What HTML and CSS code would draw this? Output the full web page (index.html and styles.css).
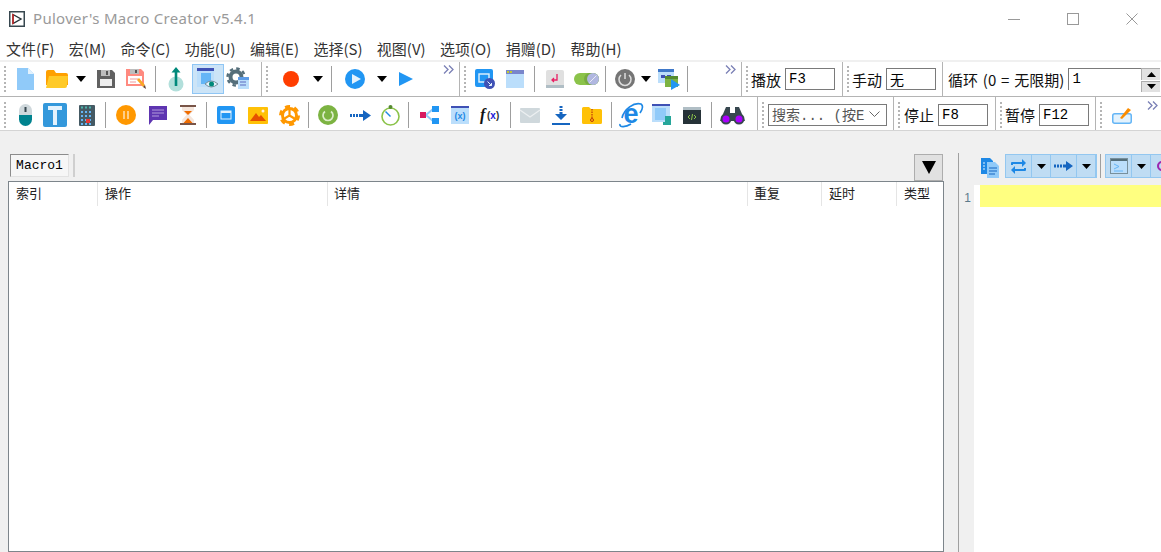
FILE: index.html
```html
<!DOCTYPE html>
<html lang="zh">
<head>
<meta charset="utf-8">
<title>Pulover's Macro Creator v5.4.1</title>
<link rel="stylesheet" href="styles.css">
</head>
<body>
<header class="titlebar">
  <svg class="appicon" width="16" height="16" viewBox="0 0 16 16"><rect x=".75" y=".75" width="14.5" height="14.5" fill="#fff" stroke="#37474f" stroke-width="1.5"/><path d="M4 3.500 12 8l-8 4.500z" fill="none" stroke="#263238" stroke-width="1.400"/><path d="M4 3v10" stroke="#c62828" stroke-width="1.600"/></svg>
  <span class="apptitle">Pulover's Macro Creator v5.4.1</span>
  <div class="winbtns">
    <svg width="12" height="12" viewBox="0 0 12 12"><path d="M0 6.500h12" stroke="#999"/></svg>
    <svg width="12" height="12" viewBox="0 0 12 12"><rect x=".5" y=".5" width="11" height="11" fill="none" stroke="#999"/></svg>
    <svg width="12" height="12" viewBox="0 0 12 12"><path d="M.5.500l11 11M11.500.500l-11 11" stroke="#999"/></svg>
  </div>
</header>
<nav class="menubar">
  <span>文件(F)</span><span>宏(M)</span><span>命令(C)</span><span>功能(U)</span><span>编辑(E)</span><span>选择(S)</span><span>视图(V)</span><span>选项(O)</span><span>捐赠(D)</span><span>帮助(H)</span>
</nav>
<section class="rebar">
  <div class="row row1">
    <div class="band b11">
      <i class="grip"></i>
      <svg width="17" height="22" viewBox="0 0 17 22"><path d="M0 0h11l6 6v16H0z" fill="#90caf9"/><path d="M11 0l6 6h-6z" fill="#e3f2fd"/></svg>
      <svg width="22" height="18" viewBox="0 0 22 18"><path d="M0 2a2 2 0 0 1 2-2h6l2 3h10a2 2 0 0 1 2 2v10H0z" fill="#ffa000"/><path d="M3 6h19l-1 10a2 2 0 0 1-2 2H0z" fill="#ffca28"/></svg>
      <svg class="caret" width="10" height="6" viewBox="0 0 10 6"><path d="M0 0h10L5 6z"/></svg>
      <svg width="18" height="18" viewBox="0 0 18 18"><path d="M0 0h15l3 3v15H0z" fill="#616161"/><rect x="4" y="0" width="9" height="6" fill="#bdbdbd"/><rect x="9" y="1" width="2" height="4" fill="#555"/><rect x="3" y="9" width="12" height="7" fill="#eee"/></svg>
      <svg width="20" height="20" viewBox="0 0 20 20"><path d="M0 0h15l3 3v14H0z" fill="#ff8a80"/><rect x="4" y="0" width="9" height="5" fill="#bdbdbd"/><rect x="9" y="1" width="2" height="3" fill="#555"/><rect x="2" y="7" width="14" height="8" fill="#fff"/><path d="M4 10h8M4 13h6" stroke="#ef9a9a"/><path d="M11 11l2-2 6 7-2 2z" fill="#f9a825"/><path d="M17 18l2-2 1 4z" fill="#5d4037"/></svg>
      <i class="sep"></i>
      <svg width="16" height="25" viewBox="0 0 16 25"><circle cx="8" cy="17" r="7.500" fill="#b2dfdb"/><path d="M8 0l4.500 5.500H9.300V19H6.700V5.500H3.500z" fill="#00897b"/></svg>
      <span class="pressed"><svg width="24" height="24" viewBox="0 0 24 24"><rect x="1" y="1" width="17" height="3" fill="#3f51b5"/><rect x="1" y="4" width="17" height="16" fill="#bbdefb"/><rect x="5" y="6" width="10" height="11" fill="#64b5f6"/><path d="M9 17q6-6 13 0-7 6-13 0z" fill="#e3f2fd" stroke="#78909c"/><circle cx="15.500" cy="17" r="2.500" fill="#00897b"/></svg></span>
      <svg width="22" height="22" viewBox="0 0 22 22"><circle cx="9" cy="9" r="5.500" fill="none" stroke="#546e7a" stroke-width="4"/><circle cx="9" cy="9" r="8.500" fill="none" stroke="#546e7a" stroke-width="2.400" stroke-dasharray="3.500 3.170"/><rect x="11" y="9" width="11" height="12" fill="#bbdefb"/><rect x="11" y="9" width="11" height="3" fill="#5c9be6"/><path d="M13 14h6M13 17h6" stroke="#5c6bc0"/></svg>
    </div>
    <div class="band b12">
      <i class="grip"></i>
      <svg width="18" height="18" viewBox="0 0 18 18"><circle cx="9" cy="9" r="8" fill="#ff3d00"/></svg>
      <svg class="caret" width="10" height="6" viewBox="0 0 10 6"><path d="M0 0h10L5 6z"/></svg>
      <i class="sep"></i>
      <svg width="20" height="20" viewBox="0 0 20 20"><circle cx="10" cy="10" r="10" fill="#2196f3"/><path d="M7 5l9 5-9 5z" fill="#e3f2fd"/></svg>
      <svg class="caret" width="10" height="6" viewBox="0 0 10 6"><path d="M0 0h10L5 6z"/></svg>
      <svg width="14" height="14" viewBox="0 0 14 14"><path d="M0 0l14 7-14 7z" fill="#2196f3"/></svg>
      <svg class="chev" width="11" height="9" viewBox="0 0 11 9"><path d="M1 .500l4 4-4 4M6 .500l4 4-4 4" fill="none" stroke="#7a7fb5" stroke-width="1.300"/></svg>
    </div>
    <div class="band b13">
      <i class="grip"></i>
      <svg width="20" height="20" viewBox="0 0 20 20"><rect x="0" y="0" width="18" height="18" rx="2" fill="#2196f3"/><rect x="4" y="5" width="10" height="8" fill="none" stroke="#e3f2fd" stroke-width="1.400"/><circle cx="14.500" cy="14.500" r="5.500" fill="#3f51b5"/><path d="M12.500 12.500l4 4M16.500 14v2.500H14" fill="none" stroke="#e3f2fd"/></svg>
      <svg width="18" height="18" viewBox="0 0 18 18"><rect width="18" height="18" fill="#bbdefb"/><rect width="18" height="4" fill="#7986cb"/><rect x="1" y="1" width="2" height="2" fill="#c0ca33"/><rect x="4" y="1" width="2" height="2" fill="#c0ca33"/></svg>
      <i class="sep"></i>
      <svg width="18" height="18" viewBox="0 0 18 18"><path d="M2 0h14a2 2 0 0 1 2 2v16H0V2a2 2 0 0 1 2-2z" fill="#e0e0e0"/><rect y="15" width="18" height="3" fill="#b0bec5"/><path d="M11 4v6H6M8 8l-2 2 2 2" fill="none" stroke="#e91e63" stroke-width="1.300"/></svg>
      <svg width="25" height="12" viewBox="0 0 25 12"><rect width="25" height="12" rx="6" fill="#8bc34a"/><rect x="10" width="15" height="12" rx="6" fill="#66913a" opacity=".5"/><circle cx="19" cy="6" r="6" fill="#b0b7e0"/><path d="M15.500 9.500l7-7" stroke="#e8eaf6"/></svg>
      <i class="sep"></i>
      <svg width="20" height="20" viewBox="0 0 20 20"><circle cx="10" cy="10" r="10" fill="#757575"/><path d="M6 6a6 6 0 1 0 8 0" fill="none" stroke="#ddd" stroke-width="1.500"/><path d="M10 4v6" stroke="#ddd" stroke-width="1.500"/></svg>
      <svg class="caret" width="10" height="6" viewBox="0 0 10 6"><path d="M0 0h10L5 6z"/></svg>
      <svg width="22" height="21" viewBox="0 0 22 21"><rect width="16" height="14" fill="#bbdefb"/><rect width="16" height="3" fill="#3f78c9"/><rect x="3" y="6" width="4" height="3" fill="#3f51b5"/><rect x="9" y="6" width="4" height="3" fill="#3f51b5"/><rect x="7" y="7" width="13" height="11" fill="#7cb342"/><rect x="7" y="7" width="13" height="3" fill="#558b2f"/><path d="M13 10l9 6-9 5z" fill="#2196f3"/></svg>
      <i class="sep"></i>
      <svg class="chev" width="11" height="9" viewBox="0 0 11 9"><path d="M1 .500l4 4-4 4M6 .500l4 4-4 4" fill="none" stroke="#7a7fb5" stroke-width="1.300"/></svg>
    </div>
    <div class="band field b14"><i class="grip"></i><label>播放</label><span class="inp">F3</span></div>
    <div class="band field b15"><i class="grip"></i><label>手动</label><span class="inp cjk">无</span></div>
    <div class="band field b16"><label class="wide">循环 (0 = 无限期)</label><span class="inp loop">1</span>
      <span class="spin"><b><svg width="9" height="5" viewBox="0 0 9 5"><path d="M0 5h9L4.500 0z"/></svg></b><b><svg width="9" height="5" viewBox="0 0 9 5"><path d="M0 0h9L4.500 5z"/></svg></b></span>
    </div>
  </div>
  <div class="row row2">
    <div class="band b21">
      <i class="grip"></i>
      <svg width="13" height="22" viewBox="0 0 13 22"><path d="M0 6.500a6.500 6.500 0 0 1 13 0V11H0z" fill="#cfd8dc"/><path d="M0 11h13v4.500a6.500 6.500 0 0 1-13 0z" fill="#00838f"/><rect x="5.500" y="3" width="2" height="5" fill="#37474f"/></svg>
      <svg width="24" height="24" viewBox="0 0 24 24"><rect width="24" height="24" rx="2" fill="#3498db"/><path d="M5 3h14v4h-5v15h-4V7H5z" fill="#e3f2fd"/></svg>
      <svg width="16" height="21" viewBox="0 0 16 21"><rect width="16" height="21" rx="1" fill="#455a64"/><path d="M2 2.500h12" stroke="#4db6ac" stroke-width="2" stroke-dasharray="2 2"/><path d="M2 7h12M2 11h12M2 15h12M2 19h12" stroke="#64b5f6" stroke-width="2" stroke-dasharray="2 2"/><rect x="7" y="14" width="4" height="4" fill="#e53935"/></svg>
      <i class="sep"></i>
      <svg width="20" height="20" viewBox="0 0 20 20"><circle cx="10" cy="10" r="10" fill="#ff9800"/><path d="M8 6v8M12 6v8" stroke="#ffe0b2" stroke-width="1.500"/></svg>
      <svg width="18" height="19" viewBox="0 0 18 19"><path d="M0 0h18v14H4l-4 5z" fill="#5e35b1"/><path d="M3 4h12M3 7h12M3 10h7" stroke="#b39ddb"/></svg>
      <svg width="16" height="20" viewBox="0 0 16 20"><path d="M2 2h12v3L9.500 10 14 15v3H2v-3l4.500-5L2 5z" fill="#f5e6dc"/><path d="M4 6h8l-4 4zM3.500 18 8 13l4.500 5z" fill="#ef6c00"/><rect width="16" height="2" fill="#795548"/><rect y="18" width="16" height="2" fill="#795548"/></svg>
      <i class="sep"></i>
      <svg width="18" height="18" viewBox="0 0 18 18"><rect width="18" height="18" rx="2" fill="#2196f3"/><rect x="3.500" y="4.500" width="11" height="9" fill="#e3f2fd"/><rect x="4.500" y="7" width="9" height="5.500" fill="#2196f3"/></svg>
      <svg width="20" height="17" viewBox="0 0 20 17"><rect width="20" height="17" rx="1" fill="#ffc107"/><path d="M2 14l6-8 3 4 2-2 5 6z" fill="#e65100"/><circle cx="15" cy="4" r="1.500" fill="#fff3e0"/></svg>
      <svg width="21" height="21" viewBox="0 0 21 21"><circle cx="10.500" cy="10.500" r="7" fill="none" stroke="#ff9800" stroke-width="3"/><circle cx="10.500" cy="10.500" r="9" fill="none" stroke="#ff9800" stroke-width="3" stroke-dasharray="5 4.420"/><path d="M10.500 3v7.500L4 14.500M10.500 10.500l6.500 4" stroke="#ff9800" stroke-width="2.200" fill="none"/></svg>
      <i class="sep"></i>
      <svg width="20" height="20" viewBox="0 0 20 20"><circle cx="10" cy="10" r="10" fill="#7cb342"/><path d="M7 6.500a5 5 0 1 0 6 0" fill="none" stroke="#dcedc8" stroke-width="1.700"/></svg>
      <svg width="21" height="11" viewBox="0 0 21 11"><path d="M0 4h2v3H0zM3 4h2v3H3zM6 4h2v3H6zM9 4h4V0l8 5.500-8 5.500V7H9z" fill="#1565c0"/></svg>
      <svg width="19" height="21" viewBox="0 0 19 21"><circle cx="9.500" cy="11.500" r="8.500" fill="none" stroke="#8bc34a" stroke-width="1.600"/><circle cx="9.500" cy="2" r="2" fill="#558b2f"/><path d="M4.500 6.500l5 5" stroke="#1e88e5" stroke-width="1.400"/></svg>
      <i class="sep"></i>
      <svg width="19" height="18" viewBox="0 0 19 18"><path d="M6 9L13 3M6 9l7 6" stroke="#90caf9" stroke-width="2"/><rect y="6" width="6" height="6" fill="#d81b60"/><rect x="12" width="7" height="6" fill="#2196f3"/><rect x="12" y="12" width="7" height="6" fill="#2196f3"/></svg>
      <svg width="18" height="18" viewBox="0 0 18 18"><rect width="18" height="18" fill="#bbdefb"/><rect width="18" height="2" fill="#3f51b5"/><text x="9" y="13" class="svgx">(x)</text></svg>
      <svg width="21" height="18" viewBox="0 0 21 18"><text x="0" y="14" class="svgf">f</text><text x="7" y="13" class="svgfx">(<tspan fill="#1a1ad6">x</tspan>)</text></svg>
      <i class="sep"></i>
      <svg width="20" height="15" viewBox="0 0 20 15"><rect width="20" height="15" rx="1" fill="#cfd8dc"/><path d="M0 2l10 7 10-7" fill="none" stroke="#eceff1" stroke-width="1.300"/></svg>
      <svg width="18" height="19" viewBox="0 0 18 19"><path d="M7.500 0h3v2h-3zM7.500 3h3v2h-3zM7.500 6h3v2H15l-6 6-6-6h4.500z" fill="#1565c0"/><rect y="17" width="18" height="2" fill="#1565c0"/></svg>
      <svg width="20" height="17" viewBox="0 0 20 17"><path d="M0 1.500A1.500 1.500 0 0 1 1.500 0H7l2 2h9.500A1.500 1.500 0 0 1 20 3.500v12a1.500 1.500 0 0 1-1.500 1.500h-17A1.500 1.500 0 0 1 0 15.500z" fill="#ffc107"/><path d="M10 2v9" stroke="#bf360c" stroke-width="1.200" stroke-dasharray="1.500 1"/><circle cx="10" cy="13" r="1.500" fill="none" stroke="#bf360c"/></svg>
      <i class="sep"></i>
      <svg width="25" height="25" viewBox="0 0 25 25"><text x="12" y="20" class="svgie">e</text><path d="M3 15C5 6 15-1 22 1c3 2 1 6-1 9M1 21c-1 4 6 3 11 0" fill="none" stroke="#1e88e5" stroke-width="1.700"/></svg>
      <svg width="20" height="22" viewBox="0 0 20 22"><rect width="18" height="18" fill="#bbdefb"/><rect width="18" height="2" fill="#3f51b5"/><rect x="3" y="4" width="11" height="12" fill="#90caf9"/><path d="M13 12h6v6h-6zM11 18h8v3h-8z" fill="#26a69a"/></svg>
      <svg width="18" height="17" viewBox="0 0 18 17"><rect width="18" height="17" fill="#263238"/><rect width="18" height="3" fill="#b0bec5"/><path d="M7 8l-2 2 2 2M11 8l2 2-2 2M8.500 13l1-6" fill="none" stroke="#8bc34a"/></svg>
      <i class="sep"></i>
      <svg width="25" height="19" viewBox="0 0 25 19"><path d="M6 1h4v6h5V1h4l6 14H0z" fill="#37474f"/><circle cx="6" cy="13" r="5.500" fill="#37474f"/><circle cx="19" cy="13" r="5.500" fill="#37474f"/><circle cx="6" cy="13" r="3.500" fill="#aa00ff"/><circle cx="19" cy="13" r="3.500" fill="#aa00ff"/></svg>
    </div>
    <div class="band field b22"><i class="grip"></i>
      <span class="combo"><span>搜索... (按E</span><svg width="11" height="6" viewBox="0 0 11 6"><path d="M.5.500l5 5 5-5" fill="none" stroke="#666"/></svg></span>
    </div>
    <div class="band field b23"><i class="grip"></i><label>停止</label><span class="inp">F8</span></div>
    <div class="band field b24"><i class="grip"></i><label>暂停</label><span class="inp">F12</span></div>
    <div class="band b25"><i class="grip"></i>
      <svg width="20" height="18" viewBox="0 0 20 18"><rect x=".75" y="7.750" width="18.500" height="9.500" rx="2" fill="#e3f2fd" stroke="#64b5f6" stroke-width="1.500"/><path d="M8 12l8-10 3 2-9 9z" fill="#fb8c00"/></svg>
      <svg class="chev" width="11" height="9" viewBox="0 0 11 9"><path d="M1 .500l4 4-4 4M6 .500l4 4-4 4" fill="none" stroke="#7a7fb5" stroke-width="1.300"/></svg>
    </div>
  </div>
</section>
<main class="workspace">
  <div class="macro-pane">
    <div class="tabstrip">
      <span class="tab">Macro1</span><i class="tabsep"></i>
      <span class="tabmenu"><svg width="14" height="13" viewBox="0 0 14 13"><path d="M0 0h14L7 13z"/></svg></span>
    </div>
    <div class="list">
      <div class="listhead"><span class="c1">索引</span><span class="c2">操作</span><span class="c3">详情</span><span class="c4">重复</span><span class="c5">延时</span><span class="c6">类型</span></div>
    </div>
  </div>
  <i class="splitter"></i>
  <div class="code-pane">
    <div class="codetools">
      <svg width="18" height="20" viewBox="0 0 18 20"><path d="M0 0h9l3 3v13H0z" fill="#1e88e5"/><path d="M6 4h8l4 4v12H6z" fill="#90caf9"/><path d="M8 10h8M8 13h8M8 16h6" stroke="#1565c0"/><path d="M2 5h2M2 8h2M2 11h2" stroke="#e3f2fd"/></svg>
      <div class="btngroup g1">
        <span class="gb w26"><svg width="17" height="17" viewBox="0 0 17 17"><path d="M1 7V5a1 1 0 0 1 1-1h10V1l4 4-4 4V6H3v1zM16 10v2a1 1 0 0 1-1 1H5v3l-4-4 4-4v3h9v-1z" fill="#1e88e5"/></svg></span>
        <span class="gb w19"><svg class="caret" width="9" height="5" viewBox="0 0 9 5"><path d="M0 0h9L4.500 5z"/></svg></span>
        <span class="gb w26"><svg width="19" height="10" viewBox="0 0 19 10"><path d="M0 3.500h2v3H0zM3 3.500h2v3H3zM6 3.500h2v3H6zM9 3.500h3V0l7 5-7 5V6.500H9z" fill="#1565c0"/></svg></span>
        <span class="gb w19"><svg class="caret" width="9" height="5" viewBox="0 0 9 5"><path d="M0 0h9L4.500 5z"/></svg></span>
      </div>
      <i class="sep thin"></i>
      <div class="btngroup g2">
        <span class="gb w26"><svg width="18" height="16" viewBox="0 0 18 16"><rect x=".5" y=".5" width="17" height="15" fill="#bbdefb" stroke="#78909c"/><rect x="1" y="1" width="16" height="2" fill="#546e7a"/><path d="M4 6l5 2.500-5 2.500M4 13h9" fill="none" stroke="#64b5f6"/></svg></span>
        <span class="gb w19"><svg class="caret" width="9" height="5" viewBox="0 0 9 5"><path d="M0 0h9L4.500 5z"/></svg></span>
        <span class="gb w10"><svg width="10" height="10" viewBox="0 0 10 10"><circle cx="5" cy="5" r="4" fill="none" stroke="#9c27b0" stroke-width="2"/></svg></span>
      </div>
    </div>
    <div class="editor">
      <div class="gutter">1</div>
      <div class="lines"><div class="curline"></div></div>
    </div>
  </div>
</main>
</body>
</html>
```
FILE: styles.css
```css
* { box-sizing: border-box; }
html, body { margin: 0; height: 100%; overflow: hidden; }
body {
  width: 1161px; height: 552px; background: #f0f0f0; color: #111;
  font-family: "Noto Sans CJK SC", "Noto Sans", sans-serif; font-size: 14px;
  display: flex; flex-direction: column;
}
i { display: block; }
svg { display: block; overflow: visible; }

.titlebar { height: 38px; background: #fff; display: flex; align-items: center; padding-left: 9px; flex: none; }
.appicon { margin-top: -1px; }
.apptitle { margin-left: 8px; margin-top: -2px; font-family: "Noto Sans", sans-serif; font-size: 15px; color: #9a9a9a; letter-spacing: .3px; }
.winbtns { margin-left: auto; display: flex; gap: 47px; padding-right: 23px; }

.menubar { height: 22px; background: #fff; display: flex; gap: 14.400px; padding: 0 0 2px 6px; align-items: center; flex: none; font-size: 15px; color: #333; }

.rebar { height: 72px; padding-top: 2px; flex: none; display: flex; flex-direction: column; }
.row { display: flex; background: #fff; }
.row1 { height: 35px; border-bottom: 1px solid #b4b4b4; }
.row2 { height: 34px; border-bottom: 1px solid #d4d4d4; }
.row2 .band { padding-top: 3px; }
.row2 label { margin-top: -2px; }
.band { height: 100%; display: grid; align-items: center; justify-items: center; border-right: 1px solid #b4b4b4; flex: none; }
.band:last-child { border-right: 0; }
.grip {
  width: 4px; height: 28px; justify-self: start; margin-left: 3px;
  background-image: radial-gradient(circle, #b5b5b5 1px, transparent 1.200px);
  background-size: 4px 4px;
}
.sep { width: 1px; height: 26px; background: #9e9e9e; }
.chev { align-self: start; justify-self: end; margin: 3px 5px 0 0; }
.row2 .chev { margin: 1px 3px 0 0; }
.pressed { width: 32px; height: 30px; background: #cce4f7; border: 1px solid #8fc6f5; display: flex; align-items: center; justify-content: center; }

.b11 { width: 262px; grid-template-columns: 10px 30px 34px 14px 36px 24px 14px 28px 36px 24px 1fr; }
.b12 { width: 198px; grid-template-columns: 10px 38px 16px 10px 38px 16px 32px 1fr; }
.b13 { width: 282px; grid-template-columns: 10px 30px 30px 8px 34px 28px 10px 30px 12px 34px 2px 1fr; }
.b14 { width: 101px; }
.b15 { width: 100px; }
.b16 { width: 218px; padding-left: 5px; }
.b21 { width: 758px; grid-template-columns: 10px 30px 30px 34px 2px 40px 24px 36px 1px 38px 26px 36px 2px 38px 26px 34px 2px 40px 22px 38px 2px 38px 24px 38px 1px 38px 24px 36px 2px 40px 1fr; }
.b22 { width: 136px; }
.b23 { width: 102px; }
.b24 { width: 100px; }
.b25 { width: 65px; grid-template-columns: 10px 32px 1fr; }

.field { display: flex; align-items: center; justify-content: flex-start; gap: 4px; }
.field .grip { margin-right: -2px; }
.b23 .grip { margin-right: -1px; }
label { font-size: 15px; line-height: 1; color: #111; white-space: nowrap; }
label.wide { word-spacing: 1.500px; }
.inp {
  width: 50px; height: 22px; border: 1px solid #7a7a7a; background: #fff; flex: none;
  font-family: "Liberation Mono", monospace; font-size: 14px; line-height: 20px; padding-left: 3px; color: #000;
}
.inp.cjk { font-family: "Noto Sans CJK SC", sans-serif; }
.inp.loop { width: 73px; border-right: 0; border-bottom: 0; }
.spin { width: 19px; height: 24px; margin-left: -4px; display: flex; flex-direction: column; gap: 1px; margin-top: 2px; flex: none; }
.spin b { flex: 1; background: #e1e1e1; border: 1px solid #adadad; border-width: 1px 0 0 1px; display: flex; align-items: center; justify-content: center; }
.combo {
  width: 119px; height: 22px; margin-left: 1px; border: 1px solid #7a7a7a; display: flex; align-items: center; justify-content: space-between; flex: none;
  padding: 0 6px 2px 3px; font-family: "Liberation Mono", "Noto Sans CJK SC", monospace; font-size: 14px; color: #555; white-space: nowrap; overflow: hidden;
}

.workspace { flex: 1; display: flex; min-height: 0; padding-top: 22px; }
.macro-pane { width: 958px; flex: none; padding-left: 8px; display: flex; flex-direction: column; }
.tabstrip { height: 27px; display: flex; align-items: flex-start; padding-left: 2px; flex: none; }
.tab {
  width: 59px; height: 23px; border: 1px solid #e2e2e2; border-top-color: #8c8c8c; border-left-color: #8c8c8c;
  font-family: "Liberation Mono", monospace; font-size: 13px; line-height: 22px; text-align: center; color: #000;
  background: #f6f6f6;
}
.tabsep { width: 2px; height: 23px; margin-left: 4px; background: #cfcfcf; }
.tabmenu { margin-left: auto; margin-right: 15px; width: 29px; height: 27px; background: #e1e1e1; border: 1px solid #adadad; display: flex; align-items: center; justify-content: center; }
.list { width: 936px; flex: 1; background: #fff; border: 1px solid #7d858b; }
.listhead { height: 24px; display: flex; align-items: center; font-size: 13px; color: #222; }
.listhead span { height: 24px; line-height: 22px; padding-left: 7px; border-right: 1px solid #e5e5e5; flex: none; }
.c1 { width: 89px; }
.c2 { width: 230px; }
.c3 { width: 420px; }
.c4 { width: 74px; }
.c5 { width: 75px; }
.listhead .c6 { width: 46px; border: 0; }
.listhead .c3, .listhead .c4 { padding-left: 6px; }

.splitter { width: 1px; flex: none; background: #a0a0a0; margin-top: -1px; }
.code-pane { flex: 1; min-width: 0; display: flex; flex-direction: column; overflow: hidden; }
.codetools { height: 31px; display: flex; align-items: flex-start; padding-left: 22px; flex: none; }
.codetools > svg { margin-top: 4px; }
.btngroup { height: 24px; margin-left: 6px; display: flex; background: #bfdcf3; border: 1px solid #93c7f0; flex: none; }
.g2 { margin-left: 4px; border-right: 0; }
.gb { display: flex; align-items: center; justify-content: center; border-right: 1px solid #93c7f0; height: 100%; }
.w26 { width: 26px; }
.w19 { width: 19px; }
.w10 { width: 10px; border: 0; justify-content: flex-start; padding-left: 6px; }
.sep.thin { height: 24px; margin-left: 3px; }
.editor { flex: 1; display: flex; min-height: 0; }
.gutter { width: 15px; font-size: 12px; color: #5c7a8c; text-align: right; padding: 6px 3px 0 0; font-family: "Liberation Sans", sans-serif; }
.lines { flex: 1; background: #fff; padding-left: 6px; }
.curline { height: 22px; background: #ffff80; }

.svgx { font: bold 9px "Liberation Sans", sans-serif; fill: #1e88e5; text-anchor: middle; }
.svgf { font: italic bold 16px "Liberation Serif", serif; fill: #111; }
.svgfx { font: bold 10px "Liberation Sans", sans-serif; fill: #333; }
.svgie { font: bold 27px "Liberation Sans", sans-serif; fill: #1e88e5; text-anchor: middle; }
```
